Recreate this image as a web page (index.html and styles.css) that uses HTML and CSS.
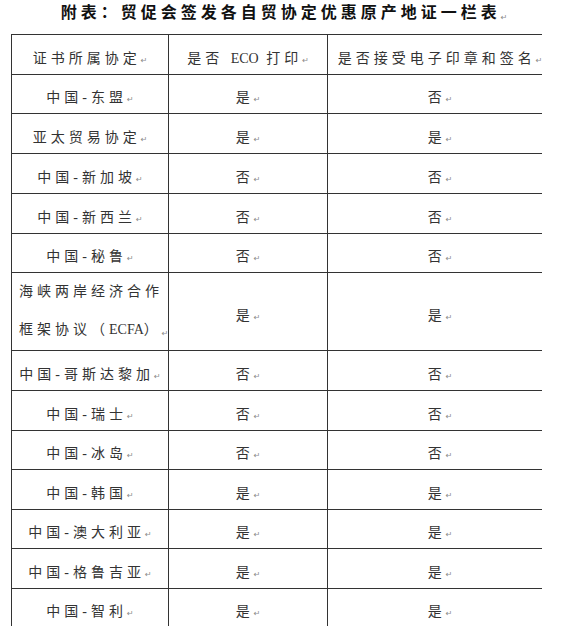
FILE: index.html
```html
<!DOCTYPE html>
<html lang="zh-CN">
<head>
<meta charset="utf-8">
<title>附表：贸促会签发各自贸协定优惠原产地证一栏表</title>
<link rel="stylesheet" href="styles.css">
</head>
<body>
<div class="title">附表：贸促会签发各自贸协定优惠原产地证一栏表<span class="pm">↵</span></div>
<div class="sheet">
  <div class="grid">
    <div class="cell">证书所属协定<span class="pm">↵</span></div>
    <div class="cell">是否 <span class="lat">ECO</span> 打印<span class="pm">↵</span></div>
    <div class="cell nowrap">是否接受电子印章和签名<span class="pm">↵</span></div>

    <div class="cell">中国-东盟<span class="pm">↵</span></div>
    <div class="cell">是<span class="pm">↵</span></div>
    <div class="cell">否<span class="pm">↵</span></div>

    <div class="cell">亚太贸易协定<span class="pm">↵</span></div>
    <div class="cell">是<span class="pm">↵</span></div>
    <div class="cell">是<span class="pm">↵</span></div>

    <div class="cell">中国-新加坡<span class="pm">↵</span></div>
    <div class="cell">否<span class="pm">↵</span></div>
    <div class="cell">否<span class="pm">↵</span></div>

    <div class="cell">中国-新西兰<span class="pm">↵</span></div>
    <div class="cell">否<span class="pm">↵</span></div>
    <div class="cell">否<span class="pm">↵</span></div>

    <div class="cell">中国-秘鲁<span class="pm">↵</span></div>
    <div class="cell">否<span class="pm">↵</span></div>
    <div class="cell">否<span class="pm">↵</span></div>

    <div class="cell multi">海峡两岸经济合作<br>框架协议（<span class="lat">ECFA</span>）<span class="pm">↵</span></div>
    <div class="cell">是<span class="pm">↵</span></div>
    <div class="cell">是<span class="pm">↵</span></div>

    <div class="cell">中国-哥斯达黎加<span class="pm">↵</span></div>
    <div class="cell">否<span class="pm">↵</span></div>
    <div class="cell">否<span class="pm">↵</span></div>

    <div class="cell">中国-瑞士<span class="pm">↵</span></div>
    <div class="cell">否<span class="pm">↵</span></div>
    <div class="cell">否<span class="pm">↵</span></div>

    <div class="cell">中国-冰岛<span class="pm">↵</span></div>
    <div class="cell">否<span class="pm">↵</span></div>
    <div class="cell">否<span class="pm">↵</span></div>

    <div class="cell">中国-韩国<span class="pm">↵</span></div>
    <div class="cell">是<span class="pm">↵</span></div>
    <div class="cell">是<span class="pm">↵</span></div>

    <div class="cell">中国-澳大利亚<span class="pm">↵</span></div>
    <div class="cell">是<span class="pm">↵</span></div>
    <div class="cell">是<span class="pm">↵</span></div>

    <div class="cell">中国-格鲁吉亚<span class="pm">↵</span></div>
    <div class="cell">是<span class="pm">↵</span></div>
    <div class="cell">是<span class="pm">↵</span></div>

    <div class="cell">中国-智利<span class="pm">↵</span></div>
    <div class="cell">是<span class="pm">↵</span></div>
    <div class="cell">是<span class="pm">↵</span></div>
  </div>
</div>
</body>
</html>
```

FILE: styles.css
```css
html, body {
  margin: 0;
  padding: 0;
  background: #ffffff;
}

body {
  width: 568px;
  height: 637px;
  overflow: hidden;
  font-family: "Liberation Serif", "Noto Sans CJK SC", serif;
  color: #333333;
}

.title {
  height: 34px;
  box-sizing: border-box;
  padding-top: 1px;
  line-height: 20px;
  font-family: "Noto Sans CJK SC", sans-serif;
  font-size: 16px;
  font-weight: 700;
  letter-spacing: 4px;
  color: #111111;
  text-align: center;
  white-space: nowrap;
}

.sheet {
  margin-left: 11px;
  width: 531px;
  height: 592px;
  overflow: hidden;
}

.grid {
  display: grid;
  grid-template-columns: 157px 159px 225px;
  grid-template-rows: 40px 39px 40px 40px 40px 39px 78px 40px 40px 39px 40px 39px 40px 38px;
}

.cell {
  box-sizing: border-box;
  border-top: 1px solid #333333;
  border-left: 1px solid #333333;
  display: flex;
  align-items: center;
  justify-content: center;
  padding-top: 8px;
  font-size: 14px;
  line-height: 20px;
  letter-spacing: 4px;
  white-space: pre;
}

.cell.multi {
  display: block;
  padding: 0 0 0 7px;
  line-height: 38px;
  text-align: left;
}

.lat {
  letter-spacing: 0;
  margin-right: 0;
}

.pm {
  font-family: "DejaVu Sans", sans-serif;
  font-size: 8px;
  letter-spacing: 0;
  color: #8a8a8a;
  position: relative;
  top: 2px;
}

.title .pm {
  font-weight: 400;
}
```
